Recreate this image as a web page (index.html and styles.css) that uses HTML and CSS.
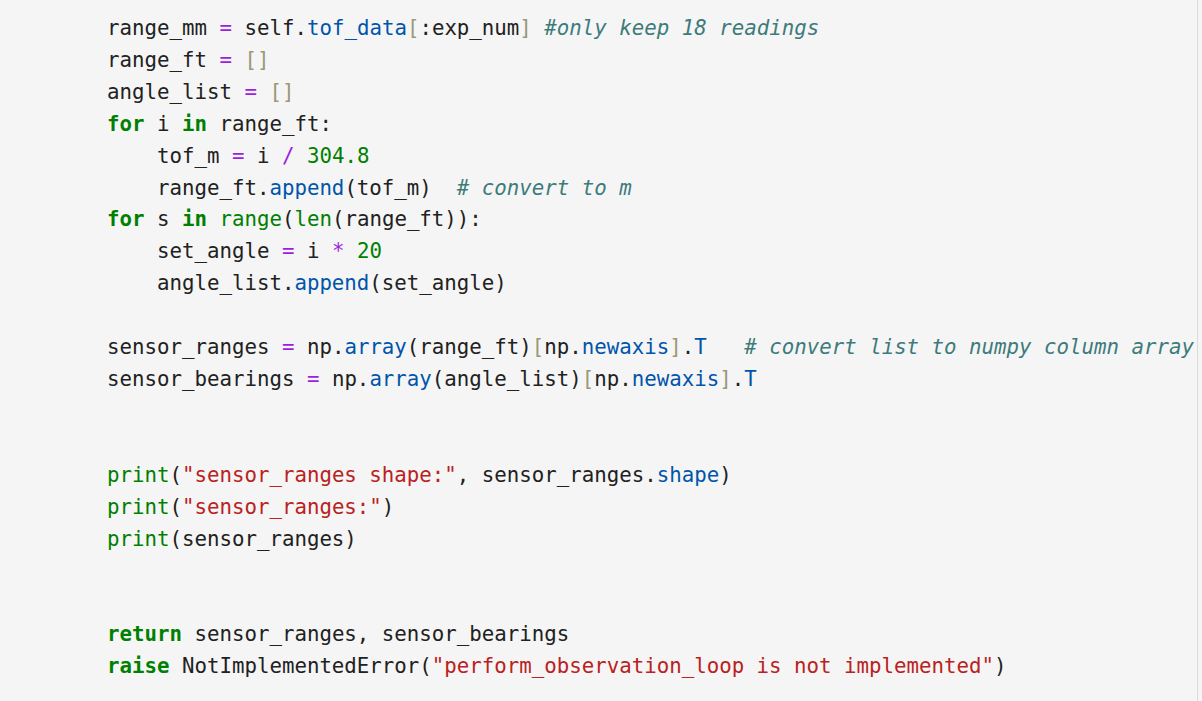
FILE: index.html
```html
<!DOCTYPE html>
<html>
<head>
<meta charset="utf-8">
<link rel="stylesheet" href="styles.css">
</head>
<body>
<div class="cell">
<pre class="code"><span class="v">range_mm</span> <span class="o">=</span> <span class="v">self</span>.<span class="p">tof_data</span><span class="b">[</span>:exp_num<span class="b">]</span> <span class="c">#only keep 18 readings</span>
range_ft <span class="o">=</span> <span class="b">[]</span>
angle_list <span class="o">=</span> <span class="b">[]</span>
<span class="k">for</span> i <span class="k">in</span> range_ft:
    tof_m <span class="o">=</span> i <span class="o">/</span> <span class="n">304.8</span>
    range_ft.<span class="p">append</span>(tof_m)  <span class="c"># convert to m</span>
<span class="k">for</span> s <span class="k">in</span> <span class="bi">range</span>(<span class="bi">len</span>(range_ft)):
    set_angle <span class="o">=</span> i <span class="o">*</span> <span class="n">20</span>
    angle_list.<span class="p">append</span>(set_angle)

sensor_ranges <span class="o">=</span> np.<span class="p">array</span>(range_ft)<span class="b">[</span>np.<span class="p">newaxis</span><span class="b">]</span>.<span class="p">T</span>   <span class="c"># convert list to numpy column array</span>
sensor_bearings <span class="o">=</span> np.<span class="p">array</span>(angle_list)<span class="b">[</span>np.<span class="p">newaxis</span><span class="b">]</span>.<span class="p">T</span>


<span class="bi">print</span>(<span class="s">"sensor_ranges shape:"</span>, sensor_ranges.<span class="p">shape</span>)
<span class="bi">print</span>(<span class="s">"sensor_ranges:"</span>)
<span class="bi">print</span>(sensor_ranges)


<span class="k">return</span> sensor_ranges, sensor_bearings
<span class="k">raise</span> NotImplementedError(<span class="s">"perform_observation_loop is not implemented"</span>)</pre>
</div>
</body>
</html>
```
FILE: styles.css
```css
html, body {
  margin: 0;
  padding: 0;
  background: #f5f5f5;
}
.cell {
  width: 1197px;
  height: 701px;
  background: #f5f5f5;
  border-right: 1px solid #dcdcdc;
  overflow: hidden;
}
.code {
  margin: 0;
  padding: 13px 0 0 107px;
  font-family: "DejaVu Sans Mono", "Liberation Mono", monospace;
  font-size: 20.75px;
  line-height: 31.9px;
  color: #212121;
  white-space: pre;
}
.k { color: #008000; font-weight: bold; }
.bi { color: #008000; }
.o { color: #9a1fe0; }
.n { color: #008000; }
.p { color: #0055aa; }
.b { color: #999977; }
.s { color: #ba2121; }
.c { color: #3d7b7b; font-style: italic; }
```
